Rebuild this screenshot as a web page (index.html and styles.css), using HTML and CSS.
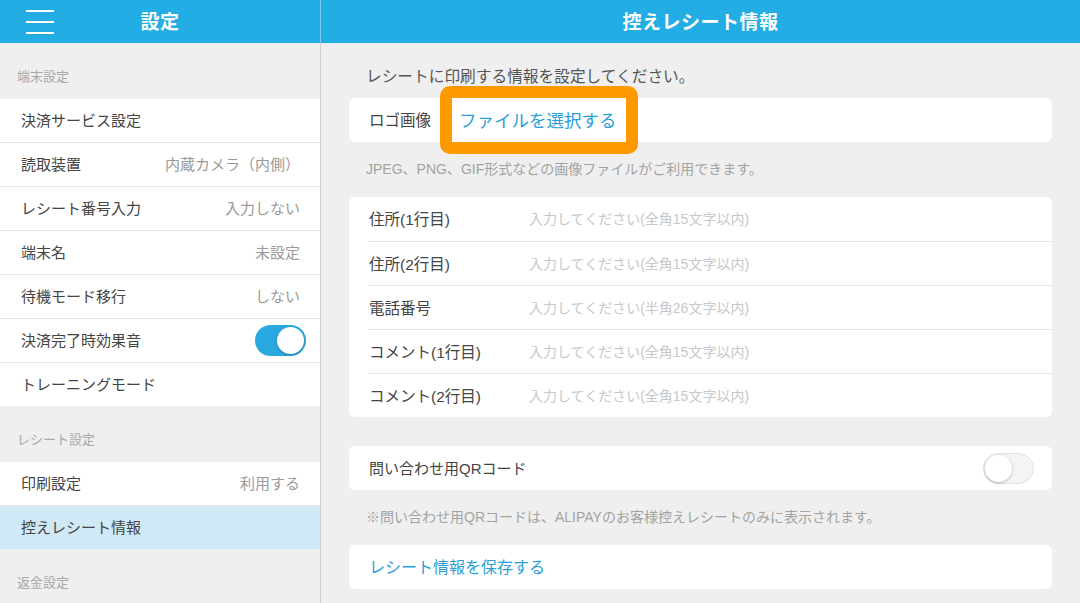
FILE: index.html
```html
<!DOCTYPE html>
<html lang="ja">
<head>
<meta charset="utf-8">
<title>控えレシート情報</title>
<link rel="stylesheet" href="styles.css">
</head>
<body>
<div class="app">
  <aside class="sidebar">
    <header class="bar bar-left">
      <button class="menu" aria-label="menu">
        <span></span><span></span><span></span>
      </button>
      <h1 class="bar-title">設定</h1>
    </header>
    <div class="side-body">
      <div class="sec-label">端末設定</div>
      <ul class="list">
        <li class="row"><span class="row-label">決済サービス設定</span></li>
        <li class="row"><span class="row-label">読取装置</span><span class="row-value">内蔵カメラ（内側）</span></li>
        <li class="row"><span class="row-label">レシート番号入力</span><span class="row-value">入力しない</span></li>
        <li class="row"><span class="row-label">端末名</span><span class="row-value">未設定</span></li>
        <li class="row"><span class="row-label">待機モード移行</span><span class="row-value">しない</span></li>
        <li class="row"><span class="row-label">決済完了時効果音</span><span class="switch on"><span class="knob"></span></span></li>
        <li class="row"><span class="row-label">トレーニングモード</span></li>
      </ul>
      <div class="sec-label">レシート設定</div>
      <ul class="list">
        <li class="row"><span class="row-label">印刷設定</span><span class="row-value">利用する</span></li>
        <li class="row selected"><span class="row-label">控えレシート情報</span></li>
      </ul>
      <div class="sec-label">返金設定</div>
    </div>
  </aside>
  <main class="main">
    <header class="bar bar-right">
      <h1 class="bar-title">控えレシート情報</h1>
    </header>
    <div class="content">
      <p class="intro">レシートに印刷する情報を設定してください。</p>
      <div class="card logo-card">
        <span class="field-label">ロゴ画像</span>
        <span class="file-btn">ファイルを選択する</span>
      </div>
      <p class="note note-1">JPEG、PNG、GIF形式などの画像ファイルがご利用できます。</p>
      <div class="card form-card">
        <div class="frow"><span class="flabel">住所(1行目)</span><span class="fph">入力してください(全角15文字以内)</span></div>
        <div class="frow"><span class="flabel">住所(2行目)</span><span class="fph">入力してください(全角15文字以内)</span></div>
        <div class="frow"><span class="flabel">電話番号</span><span class="fph">入力してください(半角26文字以内)</span></div>
        <div class="frow"><span class="flabel">コメント(1行目)</span><span class="fph">入力してください(全角15文字以内)</span></div>
        <div class="frow"><span class="flabel">コメント(2行目)</span><span class="fph">入力してください(全角15文字以内)</span></div>
      </div>
      <div class="card qr-card">
        <span class="qr-label">問い合わせ用QRコード</span>
        <span class="switch off"><span class="knob"></span></span>
      </div>
      <p class="note note-2">※問い合わせ用QRコードは、ALIPAYのお客様控えレシートのみに表示されます。</p>
      <div class="card save-card">
        <span class="save-link">レシート情報を保存する</span>
      </div>
    </div>
  </main>
</div>
</body>
</html>
```
FILE: styles.css
```css
* { box-sizing: border-box; }
html, body { margin: 0; padding: 0; }
body {
  width: 1080px;
  height: 603px;
  overflow: hidden;
  background: #efefef;
  font-family: "Liberation Sans", "Noto Sans CJK JP", sans-serif;
  color: #444;
}
.app {
  display: flex;
  height: 603px;
}
.sidebar {
  width: 321px;
  flex: none;
  display: flex;
  flex-direction: column;
}
.main {
  flex: 1;
  display: flex;
  flex-direction: column;
}
.bar {
  height: 43px;
  flex: none;
  background: #22aee4;
  display: flex;
  align-items: center;
  justify-content: center;
  position: relative;
}
.bar-left {
  border-right: 1px solid #7ccbee;
}
.bar-title {
  margin: 0 0 2px;
  color: #fff;
  font-size: 19px;
  font-weight: 700;
  letter-spacing: 0.5px;
}
.menu {
  position: absolute;
  left: 26px;
  top: 10px;
  width: 28px;
  height: 24px;
  padding: 0;
  border: 0;
  background: none;
  display: flex;
  flex-direction: column;
  justify-content: space-between;
}
.menu span {
  display: block;
  height: 2px;
  width: 28px;
  background: #fff;
}
.side-body {
  flex: 1;
  border-right: 1px solid #cfcfcf;
  background: #efefef;
}
.sec-label {
  height: 56px;
  padding: 25px 0 0 17px;
  font-size: 13px;
  line-height: 18px;
  color: #a8a8a8;
}
.list {
  list-style: none;
  margin: 0;
  padding: 0;
  background: #fff;
}
.row {
  height: 44px;
  display: flex;
  align-items: center;
  justify-content: space-between;
  padding: 0 20px 2px 21px;
  border-top: 1px solid #e6e6e6;
  font-size: 15px;
}
.row:first-child { border-top: 0; height: 43px; }
.row.selected { background: #cfe9f7; }
.row-label { color: #444; }
.row-value { color: #9a9a9a; font-size: 15px; }
.switch {
  width: 51px;
  height: 31px;
  border-radius: 16px;
  position: relative;
  flex: none;
}
.switch.on {
  background: #2aa8e0;
  margin-right: -6px;
  margin-top: 2px;
}
.switch.off {
  background: #f4f4f4;
  border: 1px solid #e2e2e2;
}
.knob {
  position: absolute;
  top: 2px;
  width: 27px;
  height: 27px;
  border-radius: 50%;
  background: #fff;
  box-shadow: 0 1px 3px rgba(0,0,0,0.25);
}
.switch.on .knob { right: 2px; }
.switch.off .knob { left: 1px; top: 1px; }

.content {
  padding: 0 28px;
}
.intro {
  margin: 24px 0 0 17px;
  font-size: 15.7px;
  line-height: 20px;
  color: #555;
}
.card {
  background: #fff;
  border-radius: 6px;
}
.logo-card {
  margin-top: 11px;
  height: 44px;
  display: flex;
  align-items: center;
  padding-left: 20px;
}
.field-label {
  font-size: 15.5px;
  color: #444;
  width: 83px;
  padding-bottom: 2px;
}
.file-btn {
  position: relative;
  height: 44px;
  display: flex;
  align-items: center;
  padding: 0 9px 2px 7px;
  font-size: 17.5px;
  color: #2a9fd8;
}
.file-btn::after {
  content: "";
  position: absolute;
  left: -12px;
  right: -12px;
  top: -12px;
  bottom: -12px;
  border: 12px solid #ff9900;
  border-radius: 10px;
}
.note {
  margin: 0 0 0 17px;
  font-size: 14px;
  line-height: 18px;
  color: #a3a3a3;
}
.note-1 { margin-top: 18px; }
.form-card {
  margin-top: 19px;
  padding-left: 20px;
}
.frow {
  height: 44px;
  display: flex;
  align-items: center;
  border-top: 1px solid #e6e6e6;
  padding-bottom: 2px;
}
.frow:first-child { border-top: 0; }
.flabel {
  width: 160px;
  flex: none;
  font-size: 15.5px;
  color: #444;
}
.fph {
  font-size: 14px;
  color: #c8c8c8;
}
.qr-card {
  margin-top: 29px;
  height: 44px;
  display: flex;
  align-items: center;
  justify-content: space-between;
  padding: 0 18px 0 20px;
}
.qr-label {
  font-size: 15px;
  color: #444;
  padding-bottom: 2px;
}
.note-2 { margin-top: 18px; }
.save-card {
  margin-top: 19px;
  height: 44px;
  display: flex;
  align-items: center;
  padding: 0 0 2px 20px;
}
.save-link {
  font-size: 16px;
  color: #2a9fd8;
}
```
